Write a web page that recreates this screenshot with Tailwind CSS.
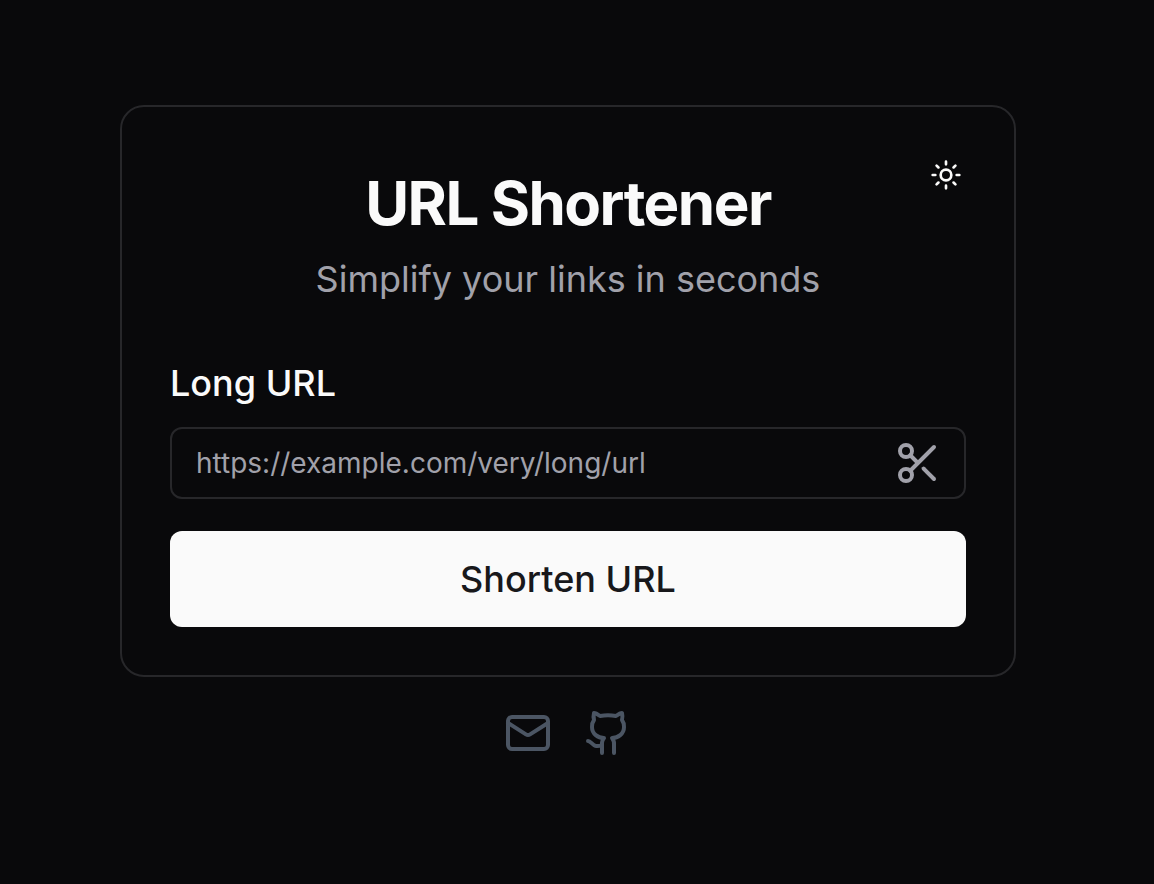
<!DOCTYPE html>
<html lang="en">
<head>
<meta charset="utf-8">
<meta name="viewport" content="width=device-width, initial-scale=1">
<title>URL Shortener</title>
<script src="https://cdn.jsdelivr.net/npm/@tailwindcss/browser@4"></script>
</head>
<body class="min-h-screen bg-[#09090b] font-['Inter',sans-serif] text-[#fafafa] antialiased">
<div class="flex min-h-screen flex-col items-center pt-[105px] pr-[138px] pl-[120px]">
  <main class="relative w-full max-w-4xl rounded-3xl border-2 border-[#27272a] px-12 pt-16 pb-12">
    <button type="button" aria-label="Toggle theme" class="absolute top-[52px] right-[52px] flex size-8 items-center justify-center">
      <svg class="size-8" viewBox="0 0 24 24" fill="none" stroke="currentColor" stroke-width="2" stroke-linecap="round" stroke-linejoin="round" aria-hidden="true"><circle cx="12" cy="12" r="4"/><path d="M12 2v2M12 20v2M4.93 4.93l1.41 1.41M17.66 17.66l1.41 1.41M2 12h2M20 12h2M6.34 17.66l-1.41 1.41M19.07 4.93l-1.41 1.41"/></svg>
    </button>
    <h1 class="text-center text-[60px] leading-[64px] font-bold tracking-tight">URL Shortener</h1>
    <p class="mt-4 text-center text-[36px] leading-[56px] text-[#a1a1aa]">Simplify your links in seconds</p>
    <form class="mt-12 flex flex-col">
      <label for="url" class="text-[36px] leading-[56px] font-medium">Long URL</label>
      <div class="relative mt-4">
        <input id="url" type="url" placeholder="https://example.com/very/long/url" class="h-[72px] w-full rounded-xl border-2 border-[#27272a] bg-transparent px-6 text-[28px] placeholder:text-[#a1a1aa]">
        <svg class="absolute top-3 right-6 size-12 text-[#a1a1aa]" viewBox="0 0 24 24" fill="none" stroke="currentColor" stroke-width="2" stroke-linecap="round" stroke-linejoin="round" aria-hidden="true"><circle cx="6" cy="6" r="3"/><path d="M8.12 8.12 12 12M20 4 8.12 15.88"/><circle cx="6" cy="18" r="3"/><path d="M14.8 14.8 20 20"/></svg>
      </div>
      <button type="submit" class="mt-8 h-24 w-full rounded-xl bg-[#fafafa] text-[36px] font-medium text-[#18181b]">Shorten URL</button>
    </form>
  </main>
  <footer class="mt-8 flex gap-8 text-[#4b5563]">
    <a href="mailto:hello@example.com" aria-label="Email"><svg class="size-12" viewBox="0 0 24 24" fill="none" stroke="currentColor" stroke-width="2" stroke-linecap="round" stroke-linejoin="round" aria-hidden="true"><rect width="20" height="16" x="2" y="4" rx="2"/><path d="m22 7-8.97 5.7a1.94 1.94 0 0 1-2.06 0L2 7"/></svg></a>
    <a href="https://github.com" aria-label="GitHub"><svg class="size-12" viewBox="0 0 24 24" fill="none" stroke="currentColor" stroke-width="2" stroke-linecap="round" stroke-linejoin="round" aria-hidden="true"><path d="M15 22v-4a4.8 4.8 0 0 0-1-3.5c3 0 6-2 6-5.5.08-1.25-.27-2.48-1-3.5.28-1.15.28-2.35 0-3.5 0 0-1 0-3 1.5-2.64-.5-5.36-.5-8 0C6 2 5 2 5 2c-.3 1.15-.3 2.35 0 3.5A5.403 5.403 0 0 0 4 9c0 3.5 3 5.5 6 5.5-.39.49-.68 1.05-.85 1.65-.17.6-.22 1.23-.15 1.85v4"/><path d="M9 18c-4.51 2-5-2-7-2"/></svg></a>
  </footer>
</div>
</body>
</html>
